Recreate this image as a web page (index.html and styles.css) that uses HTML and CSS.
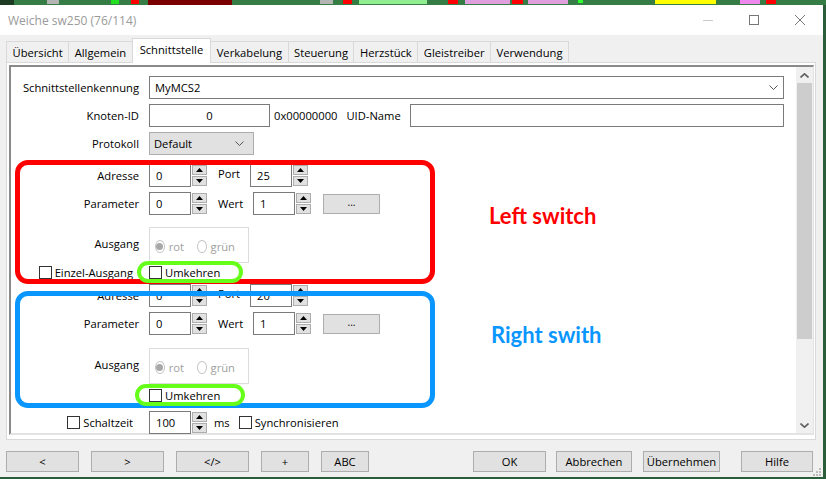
FILE: index.html
```html
<!DOCTYPE html>
<html lang="de">

<head>
    <meta charset="UTF-8">
    <title>Weiche sw250 (76/114)</title>
    <link rel="stylesheet" href="styles.css">
</head>

<body>
    <svg class="desk" width="826" height="5" viewBox="0 0 826 5">
        <rect x="0" y="0" width="826" height="5" fill="#367c45" />
        <rect x="0" y="0" width="14" height="5" fill="#1d3a22" />
        <rect x="47" y="0" width="12" height="4" fill="#b4b4b4" />
        <rect x="111" y="0" width="8" height="4" fill="#20e020" />
        <rect x="131" y="0" width="8" height="4" fill="#ff0000" />
        <rect x="148" y="0" width="84" height="5" fill="#7a0000" />
        <rect x="320" y="0" width="13" height="4" fill="#b4b4b4" />
        <rect x="343" y="0" width="9" height="4" fill="#ff0000" />
        <rect x="359" y="0" width="68" height="4" fill="#90ee90" />
        <rect x="448" y="0" width="10" height="4" fill="#ff0000" />
        <rect x="465" y="0" width="45" height="4" fill="#e0a0e0" />
        <rect x="512" y="0" width="11" height="4" fill="#ff0000" />
        <rect x="528" y="0" width="40" height="4" fill="#e0a0e0" />
        <rect x="578" y="0" width="5" height="3" fill="#30ff30" />
        <rect x="655" y="0" width="61" height="4" fill="#ffff00" />
        <rect x="740" y="0" width="20" height="4" fill="#ee88ee" />
        <rect x="766" y="0" width="10" height="4" fill="#ff0000" />
    </svg>

    <div class="dialog">
        <div class="titlebar">
            <span class="title">Weiche sw250 (76/114)</span>
            <div class="winbtns">
                <div class="winbtn">
                    <svg width="10" height="10" viewBox="0 0 10 10"><line x1="0" y1="5.5" x2="10" y2="5.5" stroke="#c8c8c8" /></svg>
                </div>
                <div class="winbtn">
                    <svg width="10" height="10" viewBox="0 0 10 10"><rect x="0.5" y="0.5" width="9" height="9" fill="none" stroke="#777" /></svg>
                </div>
                <div class="winbtn">
                    <svg width="10" height="10" viewBox="0 0 10 10"><path d="M0 0 L10 10 M10 0 L0 10" stroke="#777" /></svg>
                </div>
            </div>
        </div>

        <div class="tabs">
            <div class="tab">Übersicht</div>
            <div class="tab">Allgemein</div>
            <div class="tab active">Schnittstelle</div>
            <div class="tab">Verkabelung</div>
            <div class="tab">Steuerung</div>
            <div class="tab">Herzstück</div>
            <div class="tab">Gleistreiber</div>
            <div class="tab">Verwendung</div>
        </div>

        <div class="panel">
            <div class="scrollbox">
                <div class="content">
                    <div class="row">
                        <div class="lbl">Schnittstellenkennung</div>
                        <div class="combo">
                            <span>MyMCS2</span>
                            <svg width="9" height="5" viewBox="0 0 9 5"><polyline points="0.5,0.5 4.5,4.5 8.5,0.5" fill="none" stroke="#555" /></svg>
                        </div>
                    </div>

                    <div class="row mt5">
                        <div class="lbl">Knoten-ID</div>
                        <div class="edit edit-id">0</div>
                        <span class="hex">0x00000000</span>
                        <span class="uid">UID-Name</span>
                        <div class="edit edit-uid"></div>
                    </div>

                    <div class="row mt5">
                        <div class="lbl">Protokoll</div>
                        <div class="dropdown">
                            <span>Default</span>
                            <svg width="9" height="5" viewBox="0 0 9 5"><polyline points="0.5,0.5 4.5,4.5 8.5,0.5" fill="none" stroke="#555" /></svg>
                        </div>
                    </div>

                    <!-- linke Weiche -->
                    <div class="row mt9">
                        <div class="lbl">Adresse</div>
                        <div class="spin">
                            <div class="spin-field">0</div>
                            <div class="spin-btns">
                                <div class="spin-btn"><svg width="7" height="4" viewBox="0 0 7 4"><polygon points="0,4 3.5,0 7,4" /></svg></div>
                                <div class="spin-btn"><svg width="7" height="4" viewBox="0 0 7 4"><polygon points="0,0 7,0 3.5,4" /></svg></div>
                            </div>
                        </div>
                        <span class="sublbl">Port</span>
                        <div class="spin">
                            <div class="spin-field">25</div>
                            <div class="spin-btns">
                                <div class="spin-btn"><svg width="7" height="4" viewBox="0 0 7 4"><polygon points="0,4 3.5,0 7,4" /></svg></div>
                                <div class="spin-btn"><svg width="7" height="4" viewBox="0 0 7 4"><polygon points="0,0 7,0 3.5,4" /></svg></div>
                            </div>
                        </div>
                    </div>

                    <div class="row mt5">
                        <div class="lbl">Parameter</div>
                        <div class="spin">
                            <div class="spin-field">0</div>
                            <div class="spin-btns">
                                <div class="spin-btn"><svg width="7" height="4" viewBox="0 0 7 4"><polygon points="0,4 3.5,0 7,4" /></svg></div>
                                <div class="spin-btn"><svg width="7" height="4" viewBox="0 0 7 4"><polygon points="0,0 7,0 3.5,4" /></svg></div>
                            </div>
                        </div>
                        <span class="sublbl wert">Wert</span>
                        <div class="spin">
                            <div class="spin-field">1</div>
                            <div class="spin-btns">
                                <div class="spin-btn"><svg width="7" height="4" viewBox="0 0 7 4"><polygon points="0,4 3.5,0 7,4" /></svg></div>
                                <div class="spin-btn"><svg width="7" height="4" viewBox="0 0 7 4"><polygon points="0,0 7,0 3.5,4" /></svg></div>
                            </div>
                        </div>
                        <div class="dots">...</div>
                    </div>

                    <div class="row row-grp mt12">
                        <div class="lbl lbl-up">Ausgang</div>
                        <div class="radiobox">
                            <span class="radio on"></span><span class="rtxt">rot</span>
                            <span class="radio"></span><span class="rtxt">grün</span>
                        </div>
                    </div>

                    <div class="row row-chk">
                        <div class="lbl chklbl"><span class="chk"></span>Einzel-Ausgang</div>
                        <span class="chk"></span><span>Umkehren</span>
                    </div>

                    <!-- rechte Weiche -->
                    <div class="row mt3">
                        <div class="lbl">Adresse</div>
                        <div class="spin">
                            <div class="spin-field">0</div>
                            <div class="spin-btns">
                                <div class="spin-btn"><svg width="7" height="4" viewBox="0 0 7 4"><polygon points="0,4 3.5,0 7,4" /></svg></div>
                                <div class="spin-btn"><svg width="7" height="4" viewBox="0 0 7 4"><polygon points="0,0 7,0 3.5,4" /></svg></div>
                            </div>
                        </div>
                        <span class="sublbl">Port</span>
                        <div class="spin">
                            <div class="spin-field">20</div>
                            <div class="spin-btns">
                                <div class="spin-btn"><svg width="7" height="4" viewBox="0 0 7 4"><polygon points="0,4 3.5,0 7,4" /></svg></div>
                                <div class="spin-btn"><svg width="7" height="4" viewBox="0 0 7 4"><polygon points="0,0 7,0 3.5,4" /></svg></div>
                            </div>
                        </div>
                    </div>

                    <div class="row mt5">
                        <div class="lbl">Parameter</div>
                        <div class="spin">
                            <div class="spin-field">0</div>
                            <div class="spin-btns">
                                <div class="spin-btn"><svg width="7" height="4" viewBox="0 0 7 4"><polygon points="0,4 3.5,0 7,4" /></svg></div>
                                <div class="spin-btn"><svg width="7" height="4" viewBox="0 0 7 4"><polygon points="0,0 7,0 3.5,4" /></svg></div>
                            </div>
                        </div>
                        <span class="sublbl wert">Wert</span>
                        <div class="spin">
                            <div class="spin-field">1</div>
                            <div class="spin-btns">
                                <div class="spin-btn"><svg width="7" height="4" viewBox="0 0 7 4"><polygon points="0,4 3.5,0 7,4" /></svg></div>
                                <div class="spin-btn"><svg width="7" height="4" viewBox="0 0 7 4"><polygon points="0,0 7,0 3.5,4" /></svg></div>
                            </div>
                        </div>
                        <div class="dots">...</div>
                    </div>

                    <div class="row row-grp mt13">
                        <div class="lbl lbl-up">Ausgang</div>
                        <div class="radiobox">
                            <span class="radio on"></span><span class="rtxt">rot</span>
                            <span class="radio"></span><span class="rtxt">grün</span>
                        </div>
                    </div>

                    <div class="row row-chk mt2">
                        <div class="lbl"></div>
                        <span class="chk"></span><span>Umkehren</span>
                    </div>

                    <div class="row mt7">
                        <div class="lbl chklbl"><span class="chk"></span>Schaltzeit</div>
                        <div class="spin">
                            <div class="spin-field">100</div>
                            <div class="spin-btns">
                                <div class="spin-btn"><svg width="7" height="4" viewBox="0 0 7 4"><polygon points="0,4 3.5,0 7,4" /></svg></div>
                                <div class="spin-btn"><svg width="7" height="4" viewBox="0 0 7 4"><polygon points="0,0 7,0 3.5,4" /></svg></div>
                            </div>
                        </div>
                        <span class="ms">ms</span>
                        <span class="chk"></span><span>Synchronisieren</span>
                    </div>
                </div>

                <div class="vscroll">
                    <div class="sbtn">
                        <svg width="9" height="5" viewBox="0 0 9 5"><polyline points="0.5,4.5 4.5,0.8 8.5,4.5" fill="none" stroke="#606060" stroke-width="1.6" /></svg>
                    </div>
                    <div class="track">
                        <div class="thumb"></div>
                    </div>
                    <div class="sbtn">
                        <svg width="9" height="5" viewBox="0 0 9 5"><polyline points="0.5,0.5 4.5,4.2 8.5,0.5" fill="none" stroke="#606060" stroke-width="1.6" /></svg>
                    </div>
                </div>
            </div>
        </div>

        <div class="footer">
            <div class="btn w73">&lt;</div>
            <div class="btn w73 ml12">&gt;</div>
            <div class="btn w73 ml12">&lt;/&gt;</div>
            <div class="btn w48 ml12">+</div>
            <div class="btn w48 ml12">ABC</div>
            <div class="btn w73 ml104">OK</div>
            <div class="btn w76 ml10">Abbrechen</div>
            <div class="btn w77 ml11">Übernehmen</div>
            <div class="btn w72 ml21">Hilfe</div>
        </div>

        <svg class="grip" width="8" height="8" viewBox="0 0 8 8">
            <rect x="6" y="0" width="2" height="2" fill="#bcbcbc" />
            <rect x="3" y="3" width="2" height="2" fill="#bcbcbc" />
            <rect x="6" y="3" width="2" height="2" fill="#bcbcbc" />
            <rect x="0" y="6" width="2" height="2" fill="#bcbcbc" />
            <rect x="3" y="6" width="2" height="2" fill="#bcbcbc" />
            <rect x="6" y="6" width="2" height="2" fill="#bcbcbc" />
        </svg>
    </div>

    <!-- Markierungen -->
    <div class="mark mark-red"></div>
    <div class="mark mark-blue"></div>
    <div class="mark mark-green g1"></div>
    <div class="mark mark-green g2"></div>
    <div class="note note-left">Left switch</div>
    <div class="note note-right">Right swith</div>
</body>

</html>
```

FILE: styles.css
```css
body {
    margin: 0;
    width: 826px;
    height: 479px;
    overflow: hidden;
    background: #2c5d3a;
    font-family: 'Open Sans', sans-serif;
    font-size: 11.2px;
    color: #000;
    position: relative;
}

.desk {
    display: block;
}

.dialog {
    width: 823px;
    height: 472px;
    background: #f0f0f0;
    display: flex;
    flex-direction: column;
    position: relative;
}

.titlebar {
    height: 30px;
    background: #fff;
    display: flex;
    align-items: center;
    padding-left: 8px;
    flex: none;
}

.title {
    color: #9a9a9a;
    font-size: 12px;
    flex: 1;
}

.winbtns {
    display: flex;
    height: 100%;
}

.winbtn {
    width: 46px;
    display: flex;
    align-items: center;
    justify-content: center;
}

.tabs {
    height: 27px;
    display: flex;
    align-items: flex-end;
    padding-left: 6px;
    flex: none;
    position: relative;
    z-index: 1;
}

.tab {
    height: 21px;
    padding: 0 5.5px;
    border: 1px solid #d9d9d9;
    border-bottom: none;
    border-right: none;
    box-sizing: border-box;
    display: flex;
    align-items: center;
    background: #f0f0f0;
}

.tab:last-child {
    border-right: 1px solid #d9d9d9;
}

.tab.active {
    height: 25px;
    margin-bottom: -1px;
    background: #fff;
    border-right: 1px solid #d9d9d9;
    padding: 0 7px 3px;
}

.tab.active + .tab {
    border-left: none;
}

.panel {
    margin-left: 6px;
    width: 810px;
    height: 378px;
    background: #fff;
    border: 1px solid #d9d9d9;
    box-sizing: border-box;
    padding: 2px 1px 4px 2px;
    display: flex;
}

.scrollbox {
    flex: 1;
    display: flex;
    border-style: solid;
    border-width: 2px 1px 2px 2px;
    border-color: #8a8a8a #e3e3e3 #e3e3e3 #8a8a8a;
}

.content {
    flex: 1;
    padding-top: 9px;
}

.row {
    display: flex;
    align-items: center;
    height: 23px;
}

.lbl {
    width: 128px;
    margin-right: 10px;
    text-align: right;
    flex: none;
}

.mt2 { margin-top: 2px; }
.mt3 { margin-top: 3px; }
.mt5 { margin-top: 5px; }
.mt7 { margin-top: 7px; }
.mt9 { margin-top: 9px; }
.mt12 { margin-top: 12px; }
.mt13 { margin-top: 13px; }

.combo {
    flex: 1;
    margin-right: 12px;
    height: 23px;
    border: 1px solid #7a7a7a;
    box-sizing: border-box;
    display: flex;
    align-items: center;
    justify-content: space-between;
    padding: 0 5px 0 5px;
}

.edit {
    height: 23px;
    border: 1px solid #7a7a7a;
    box-sizing: border-box;
    display: flex;
    align-items: center;
}

.edit-id {
    width: 121px;
    justify-content: center;
}

.edit-uid {
    flex: 1;
    margin-right: 12px;
}

.hex {
    margin-left: 4px;
}

.uid {
    margin-left: 9px;
    margin-right: 9px;
}

.dropdown {
    width: 105px;
    height: 23px;
    background: #e1e1e1;
    border: 1px solid #adadad;
    box-sizing: border-box;
    display: flex;
    align-items: center;
    justify-content: space-between;
    padding: 0 9px 0 4px;
}

.spin {
    display: flex;
    width: 58px;
    height: 23px;
    flex: none;
}

.spin-field {
    width: 42px;
    border: 1px solid #7a7a7a;
    box-sizing: border-box;
    padding-left: 6px;
    display: flex;
    align-items: center;
    background: #fff;
}

.spin-btns {
    width: 15px;
    margin-left: 1px;
    padding: 1px 0;
    display: flex;
    flex-direction: column;
    gap: 1px;
    box-sizing: border-box;
}

.spin-btn {
    flex: 1;
    border: 1px solid #adadad;
    background: #e1e1e1;
    display: flex;
    align-items: center;
    justify-content: center;
}

.sublbl {
    width: 32px;
    margin-left: 11px;
    padding-bottom: 5px;
}

.sublbl.wert {
    width: 35px;
    padding-bottom: 0;
}

.dots {
    width: 57px;
    height: 20px;
    margin-left: 12px;
    background: #e1e1e1;
    border: 1px solid #adadad;
    box-sizing: border-box;
    display: flex;
    align-items: center;
    justify-content: center;
    font-size: 10px;
    padding-bottom: 3px;
}

.row-grp {
    height: 36px;
}

.lbl-up {
    padding-bottom: 4px;
}

.radiobox {
    width: 100px;
    height: 36px;
    border: 1px solid #dcdcdc;
    box-sizing: border-box;
    display: flex;
    align-items: center;
    padding: 2px 0 0 5px;
    color: #a0a0a0;
}

.radio {
    width: 13px;
    height: 13px;
    border: 1px solid #c4c4c4;
    border-radius: 50%;
    box-sizing: border-box;
    display: flex;
    align-items: center;
    justify-content: center;
}

.radio.on::after {
    content: '';
    width: 7px;
    height: 7px;
    border-radius: 50%;
    background: #a8a8a8;
}

.rtxt {
    margin-left: 4px;
    margin-right: 13px;
}

.row-chk {
    height: 18px;
}

.chklbl {
    display: flex;
    justify-content: flex-end;
    align-items: center;
    padding-right: 6px;
    box-sizing: border-box;
}

.chk {
    width: 13px;
    height: 13px;
    border: 1px solid #333;
    box-sizing: border-box;
    background: #fff;
    margin-right: 3px;
    flex: none;
}

.ms {
    margin-left: 7px;
    margin-right: 9px;
}

.vscroll {
    width: 17px;
    background: #f0f0f0;
    display: flex;
    flex-direction: column;
}

.sbtn {
    height: 16px;
    display: flex;
    align-items: center;
    justify-content: center;
}

.track {
    flex: 1;
}

.thumb {
    height: 256px;
    margin: 0 1px;
    background: #cdcdcd;
}

.footer {
    display: flex;
    padding: 11px 0 0 6px;
}

.btn {
    height: 21px;
    background: #e1e1e1;
    border: 1px solid #adadad;
    box-sizing: border-box;
    display: flex;
    align-items: center;
    justify-content: center;
}

.w48 { width: 48px; }
.w72 { width: 72px; }
.w73 { width: 73px; }
.w76 { width: 76px; }
.w77 { width: 77px; }

.ml10 { margin-left: 10px; }
.ml11 { margin-left: 11px; }
.ml12 { margin-left: 12px; }
.ml21 { margin-left: 21px; }
.ml104 { margin-left: 104px; }

.grip {
    position: absolute;
    right: 2px;
    bottom: 1px;
}

.mark {
    position: absolute;
    box-sizing: border-box;
}

.mark-red {
    left: 15px;
    top: 160px;
    width: 420px;
    height: 124px;
    border: 5px solid #ff0000;
    border-radius: 13px;
}

.mark-blue {
    left: 15px;
    top: 291px;
    width: 420px;
    height: 117px;
    border: 5px solid #0a96ff;
    border-radius: 13px;
}

.mark-green {
    border: 4px solid #66ff1a;
    border-radius: 11px;
    height: 22px;
}

.g1 {
    left: 137px;
    top: 261px;
    width: 106px;
}

.g2 {
    left: 135px;
    top: 384px;
    width: 110px;
}

.note {
    position: absolute;
    font-family: Lato, sans-serif;
    font-weight: bold;
    font-size: 22px;
}

.note-left {
    left: 489px;
    top: 202px;
    color: #ff0000;
}

.note-right {
    left: 491px;
    top: 321px;
    color: #0a96ff;
}
```
